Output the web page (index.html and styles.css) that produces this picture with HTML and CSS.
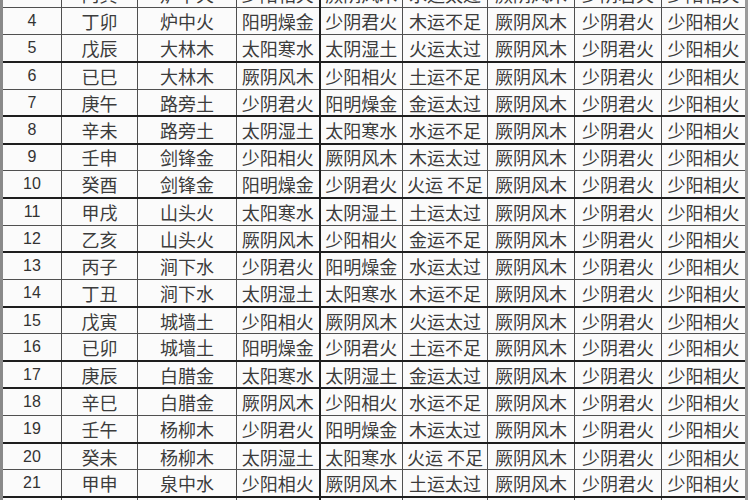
FILE: index.html
```html
<!DOCTYPE html>
<html lang="zh">
<head>
<meta charset="utf-8">
<link rel="stylesheet" href="styles.css">
</head>
<body>
<div class="sheet">
<table class="grid">
<colgroup>
<col class="c1"><col class="c2"><col class="c3"><col class="c4"><col class="c5"><col class="c6"><col class="c7"><col class="c8"><col class="c9">
</colgroup>
<tbody>
<tr><td class="num">3</td><td>丙寅</td><td>炉中火</td><td>少阳相火</td><td class="sep">厥阴风木</td><td>水运太过</td><td>厥阴风木</td><td>少阴君火</td><td>少阳相火</td></tr>
<tr><td class="num">4</td><td>丁卯</td><td>炉中火</td><td>阳明燥金</td><td class="sep">少阴君火</td><td>木运不足</td><td>厥阴风木</td><td>少阴君火</td><td>少阳相火</td></tr>
<tr class="thick"><td class="num">5</td><td>戊辰</td><td>大林木</td><td>太阳寒水</td><td class="sep">太阴湿土</td><td>火运太过</td><td>厥阴风木</td><td>少阴君火</td><td>少阳相火</td></tr>
<tr><td class="num">6</td><td>已巳</td><td>大林木</td><td>厥阴风木</td><td class="sep">少阳相火</td><td>土运不足</td><td>厥阴风木</td><td>少阴君火</td><td>少阳相火</td></tr>
<tr class="thick"><td class="num">7</td><td>庚午</td><td>路旁土</td><td>少阴君火</td><td class="sep">阳明燥金</td><td>金运太过</td><td>厥阴风木</td><td>少阴君火</td><td>少阳相火</td></tr>
<tr class="thick"><td class="num">8</td><td>辛未</td><td>路旁土</td><td>太阴湿土</td><td class="sep">太阳寒水</td><td>水运不足</td><td>厥阴风木</td><td>少阴君火</td><td>少阳相火</td></tr>
<tr><td class="num">9</td><td>壬申</td><td>剑锋金</td><td>少阳相火</td><td class="sep">厥阴风木</td><td>木运太过</td><td>厥阴风木</td><td>少阴君火</td><td>少阳相火</td></tr>
<tr class="thick"><td class="num">10</td><td>癸酉</td><td>剑锋金</td><td>阳明燥金</td><td class="sep">少阴君火</td><td>火运 不足</td><td>厥阴风木</td><td>少阴君火</td><td>少阳相火</td></tr>
<tr><td class="num">11</td><td>甲戌</td><td>山头火</td><td>太阳寒水</td><td class="sep">太阴湿土</td><td>土运太过</td><td>厥阴风木</td><td>少阴君火</td><td>少阳相火</td></tr>
<tr class="thick"><td class="num">12</td><td>乙亥</td><td>山头火</td><td>厥阴风木</td><td class="sep">少阳相火</td><td>金运不足</td><td>厥阴风木</td><td>少阴君火</td><td>少阳相火</td></tr>
<tr><td class="num">13</td><td>丙子</td><td>涧下水</td><td>少阴君火</td><td class="sep">阳明燥金</td><td>水运太过</td><td>厥阴风木</td><td>少阴君火</td><td>少阳相火</td></tr>
<tr class="thick"><td class="num">14</td><td>丁丑</td><td>涧下水</td><td>太阴湿土</td><td class="sep">太阳寒水</td><td>木运不足</td><td>厥阴风木</td><td>少阴君火</td><td>少阳相火</td></tr>
<tr><td class="num">15</td><td>戊寅</td><td>城墙土</td><td>少阳相火</td><td class="sep">厥阴风木</td><td>火运太过</td><td>厥阴风木</td><td>少阴君火</td><td>少阳相火</td></tr>
<tr class="thick"><td class="num">16</td><td>已卯</td><td>城墙土</td><td>阳明燥金</td><td class="sep">少阴君火</td><td>土运不足</td><td>厥阴风木</td><td>少阴君火</td><td>少阳相火</td></tr>
<tr class="thick"><td class="num">17</td><td>庚辰</td><td>白腊金</td><td>太阳寒水</td><td class="sep">太阴湿土</td><td>金运太过</td><td>厥阴风木</td><td>少阴君火</td><td>少阳相火</td></tr>
<tr><td class="num">18</td><td>辛巳</td><td>白腊金</td><td>厥阴风木</td><td class="sep">少阳相火</td><td>水运不足</td><td>厥阴风木</td><td>少阴君火</td><td>少阳相火</td></tr>
<tr class="thick"><td class="num">19</td><td>壬午</td><td>杨柳木</td><td>少阴君火</td><td class="sep">阳明燥金</td><td>木运太过</td><td>厥阴风木</td><td>少阴君火</td><td>少阳相火</td></tr>
<tr><td class="num">20</td><td>癸未</td><td>杨柳木</td><td>太阴湿土</td><td class="sep">太阳寒水</td><td>火运 不足</td><td>厥阴风木</td><td>少阴君火</td><td>少阳相火</td></tr>
<tr class="thick"><td class="num">21</td><td>甲申</td><td>泉中水</td><td>少阳相火</td><td class="sep">厥阴风木</td><td>土运太过</td><td>厥阴风木</td><td>少阴君火</td><td>少阳相火</td></tr>
<tr><td class="num">22</td><td>乙酉</td><td>泉中水</td><td>阳明燥金</td><td class="sep">少阴君火</td><td>金运不足</td><td>厥阴风木</td><td>少阴君火</td><td>少阳相火</td></tr>
</tbody>
</table>
</div>
</body>
</html>
```

FILE: styles.css
```css
html, body {
  margin: 0;
  padding: 0;
  background: #fbfbfb;
  overflow: hidden;
  height: 500px;
}

.sheet {
  width: 750px;
  height: 500px;
  overflow: hidden;
}

.grid {
  margin-top: -20px;
  margin-left: 0;
  width: 748px;
  border-collapse: collapse;
  table-layout: fixed;
  border-left: 3px solid #8a8a8a;
  border-right: 3px solid #9a9a9a;
  font-family: "Noto Sans CJK SC", "Noto Sans", sans-serif;
  font-size: 18px;
  color: #3c3c3c;
}

.c1 { width: 60px; }
.c2 { width: 76px; }
.c3 { width: 99px; }
.c4 { width: 83px; }
.c5 { width: 83px; }
.c6 { width: 85px; }
.c7 { width: 87px; }
.c8 { width: 87px; }
.c9 { width: 85px; }

.grid tr {
  height: 27.2px;
}

.grid td {
  padding: 0;
  text-align: center;
  vertical-align: middle;
  line-height: 20px;
  border: 1px solid #505050;
  white-space: nowrap;
  overflow: hidden;
}

.grid tr.thick td {
  border-bottom: 2px solid #1e1e1e;
}

.grid td.sep {
  border-left: 2px solid #1e1e1e;
}

.grid td.num {
  font-family: "Liberation Sans", "DejaVu Sans", sans-serif;
  font-size: 16px;
  color: #333;
}
```
